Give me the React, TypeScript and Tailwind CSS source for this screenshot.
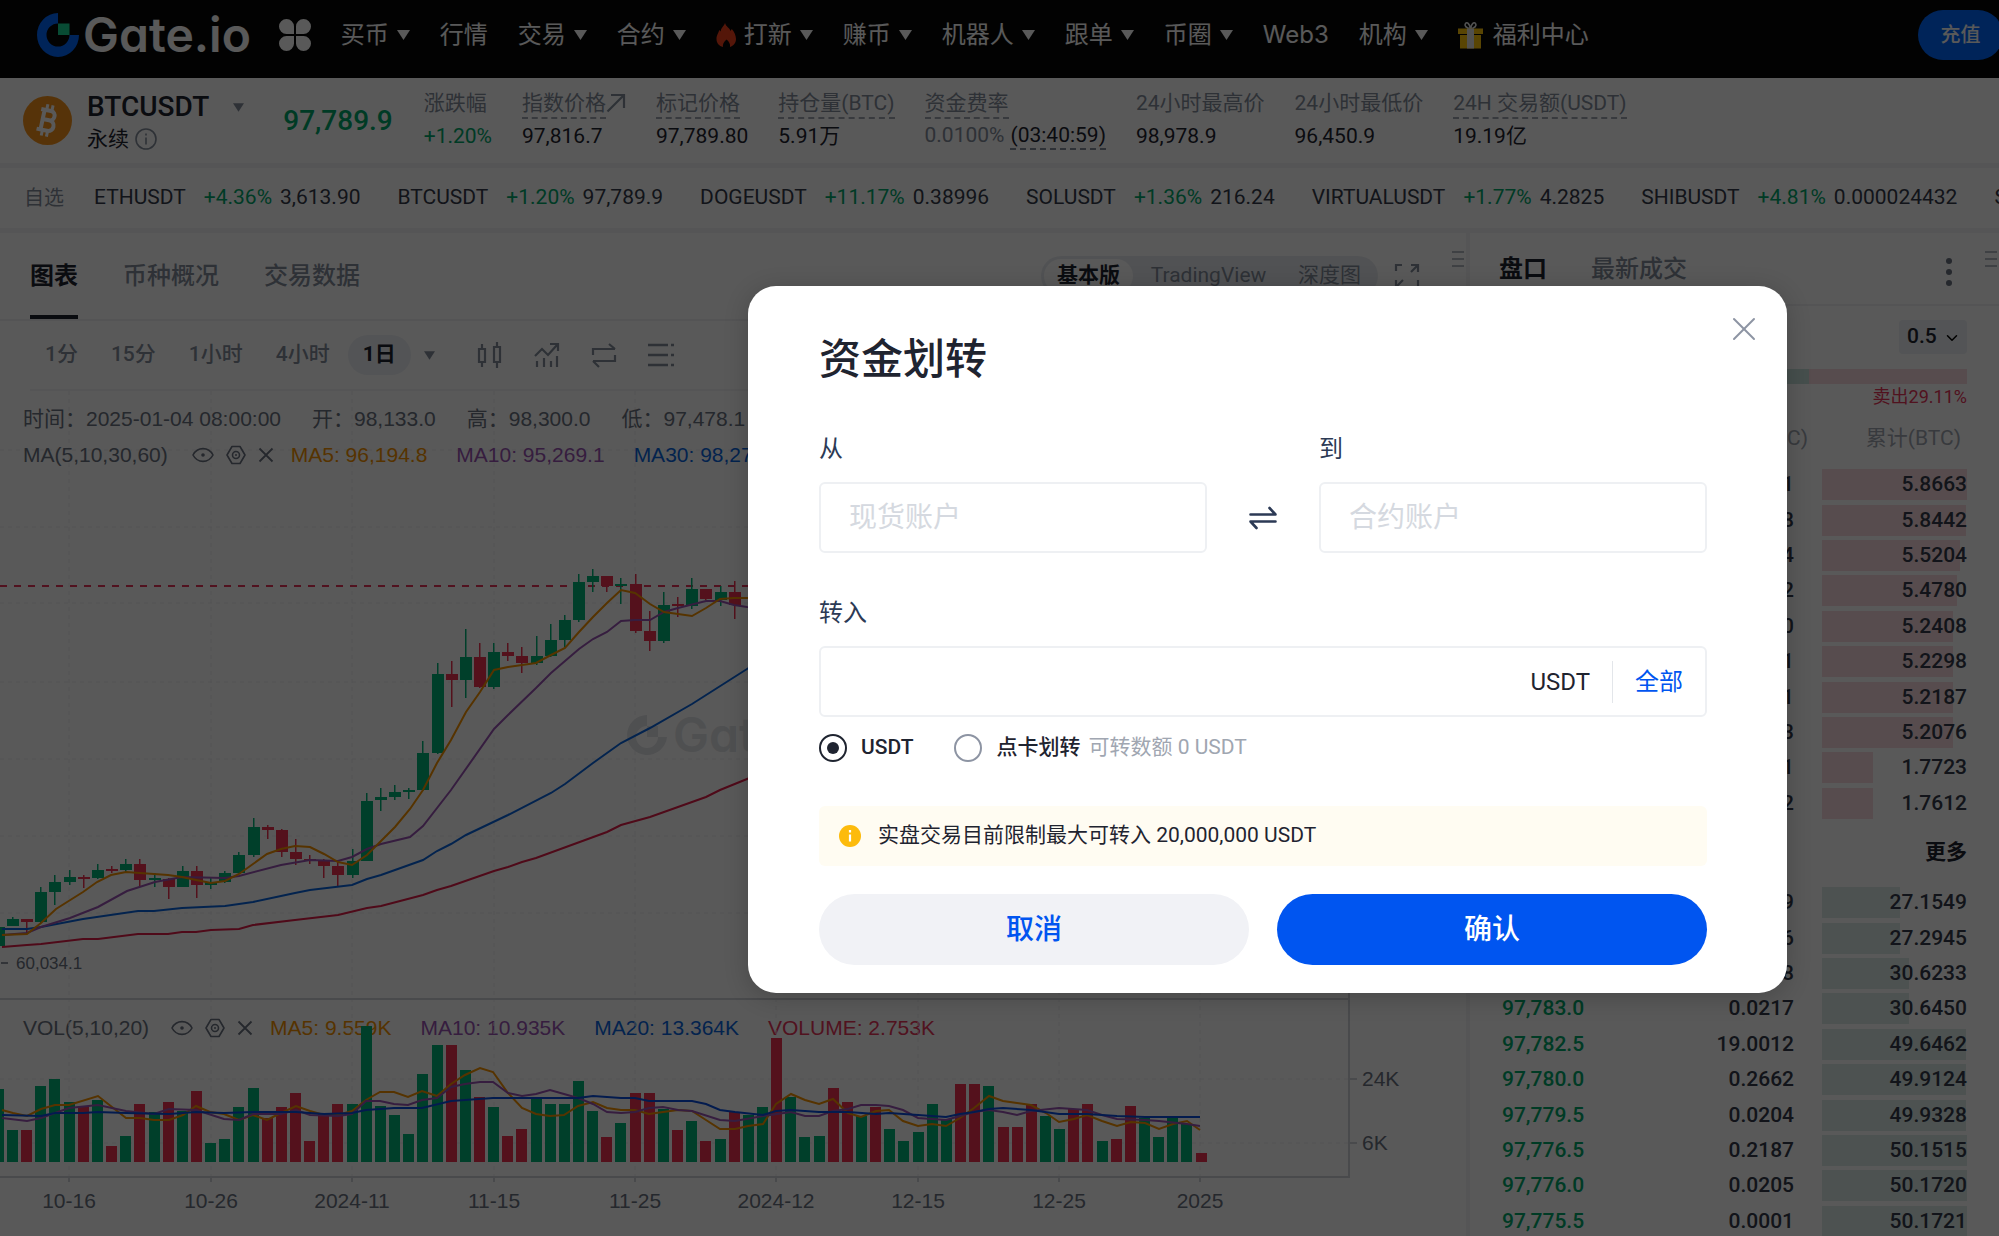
import { ChevronDown, X } from 'lucide-react'
import type { ReactNode } from 'react'

/* ---------- data ---------- */

const NAV: { label: string; caret?: boolean; icon?: 'fire' | 'gift' }[] = [
  { label: '买币', caret: true },
  { label: '行情' },
  { label: '交易', caret: true },
  { label: '合约', caret: true },
  { label: '打新', caret: true, icon: 'fire' },
  { label: '赚币', caret: true },
  { label: '机器人', caret: true },
  { label: '跟单', caret: true },
  { label: '币圈', caret: true },
  { label: 'Web3' },
  { label: '机构', caret: true },
  { label: '福利中心', icon: 'gift' },
]

const TICKERS = [
  ['ETHUSDT', '+4.36%', '3,613.90'],
  ['BTCUSDT', '+1.20%', '97,789.9'],
  ['DOGEUSDT', '+11.17%', '0.38996'],
  ['SOLUSDT', '+1.36%', '216.24'],
  ['VIRTUALUSDT', '+1.77%', '4.2825'],
  ['SHIBUSDT', '+4.81%', '0.000024432'],
  ['SUIUSDT', '+3.02%', '5.2140'],
]

type Row = [price: string, size: string, total: string, depth: number]

const ASKS: Row[] = [
  ['97,794.0', '0.0221', '5.8663', 100],
  ['97,793.5', '0.3238', '5.8442', 99],
  ['97,793.0', '0.0424', '5.5204', 95],
  ['97,792.5', '0.2372', '5.4780', 93],
  ['97,792.0', '0.0110', '5.2408', 90],
  ['97,791.5', '0.0111', '5.2298', 90],
  ['97,791.0', '0.0111', '5.2187', 90],
  ['97,790.5', '3.4353', '5.2076', 90],
  ['97,790.0', '0.0111', '1.7723', 35],
  ['97,789.9', '1.7612', '1.7612', 35],
]

const BIDS: Row[] = [
  ['97,789.8', '27.1549', '27.1549', 54],
  ['97,785.0', '0.1396', '27.2945', 54],
  ['97,784.5', '3.3288', '30.6233', 60],
  ['97,783.0', '0.0217', '30.6450', 60],
  ['97,782.5', '19.0012', '49.6462', 99],
  ['97,780.0', '0.2662', '49.9124', 99],
  ['97,779.5', '0.0204', '49.9328', 99],
  ['97,776.5', '0.2187', '50.1515', 100],
  ['97,776.0', '0.0205', '50.1720', 100],
  ['97,775.5', '0.0001', '50.1721', 100],
]

// [up, body top, body bottom, high, low]
const CANDLES: [number, number, number, number, number][] = [
  [1, 536, 555, 536, 556], [1, 528, 535, 526, 535], [0, 528, 531, 528, 542], [1, 501, 531, 496, 532],
  [1, 491, 501, 484, 514], [1, 486, 491, 479, 494], [0, 486, 487, 484, 497], [1, 479, 487, 473, 488],
  [0, 478, 480, 475, 482], [1, 473, 479, 468, 481], [0, 473, 489, 468, 495], [1, 487, 489, 482, 496],
  [0, 488, 496, 487, 508], [1, 480, 496, 475, 496], [0, 480, 494, 475, 507], [1, 491, 494, 487, 498],
  [1, 482, 491, 480, 492], [1, 464, 482, 461, 482], [1, 436, 464, 427, 466], [0, 436, 439, 434, 448],
  [0, 439, 461, 438, 466], [0, 461, 468, 448, 474], [0, 468, 469, 464, 473], [0, 469, 475, 468, 487],
  [0, 475, 484, 469, 495], [1, 470, 484, 458, 487], [1, 410, 470, 402, 470], [1, 406, 409, 397, 420],
  [1, 401, 406, 394, 409], [1, 399, 400, 397, 408], [1, 362, 399, 350, 400], [1, 283, 362, 272, 363],
  [0, 283, 289, 270, 316], [1, 266, 289, 238, 307], [0, 266, 296, 252, 297], [1, 261, 296, 252, 298],
  [0, 261, 265, 252, 270], [0, 265, 272, 256, 282], [1, 265, 272, 245, 274], [1, 249, 265, 233, 266],
  [1, 229, 249, 224, 256], [1, 191, 229, 183, 231], [1, 185, 191, 178, 201], [0, 185, 195, 185, 201],
  [1, 193, 195, 187, 213], [0, 193, 240, 183, 242], [0, 240, 250, 220, 260], [1, 214, 250, 201, 252],
  [0, 213, 215, 206, 226], [1, 198, 215, 187, 218], [0, 198, 208, 198, 209], [1, 201, 209, 195, 215],
  [0, 201, 214, 190, 228],
]

// [up, bar height]
const VOLUMES: [number, number][] = [
  [1, 73], [1, 32], [0, 32], [1, 76], [1, 83], [1, 60], [0, 56], [1, 62], [0, 16], [1, 26], [0, 58],
  [1, 50], [0, 60], [1, 51], [0, 71], [1, 19], [1, 23], [1, 55], [1, 74], [0, 44], [0, 55], [0, 69],
  [0, 21], [0, 48], [0, 58], [1, 58], [1, 136], [1, 56], [1, 47], [1, 28], [1, 88], [1, 117], [0, 117],
  [1, 92], [0, 65], [1, 55], [0, 26], [0, 33], [1, 63], [1, 58], [1, 58], [1, 81], [1, 51], [0, 25],
  [1, 39], [0, 69], [0, 69], [1, 53], [0, 32], [1, 41], [0, 21], [1, 23], [0, 50], [1, 47], [1, 55],
  [0, 124], [1, 65], [1, 25], [1, 26], [0, 74], [0, 60], [1, 46], [0, 55], [1, 33], [1, 21], [1, 30],
  [1, 58], [1, 43], [0, 78], [0, 78], [1, 76], [0, 35], [0, 35], [0, 58], [1, 46], [1, 33], [0, 53],
  [0, 58], [1, 21], [0, 23], [0, 56], [1, 44], [1, 25], [1, 46], [1, 38], [0, 9],
]

const PRICE_LINES = [
  {
    color: '#e11d48',
    points:
      '2,556 27,554 41,553 83,548 98,548 138,543 168,543 182,541 196,541 211,539 239,538 253,534 295,529 338,524 367,517 381,515 423,504 437,499 451,495 494,480 508,476 522,471 536,467 607,441 621,434 650,426 678,416 706,406 720,399 747,388 790,372',
  },
  {
    color: '#0a66e0',
    points:
      '2,538 27,538 41,536 83,528 138,520 154,520 182,517 225,515 253,511 281,505 295,502 310,499 352,494 367,488 381,484 423,469 437,460 451,453 466,444 508,424 551,402 565,393 593,372 607,362 621,352 650,337 692,313 747,278 790,250',
  },
  {
    color: '#9a55b4',
    points:
      '2,544 27,542 41,536 70,527 98,516 127,500 155,491 182,486 225,487 239,485 281,474 310,469 338,470 352,466 367,458 381,453 410,446 423,435 451,399 494,338 508,324 536,297 551,282 579,258 593,248 607,241 621,230 635,229 650,229 664,221 678,217 706,210 720,210 734,214 747,216 790,218',
  },
  {
    color: '#f59300',
    points:
      '2,544 27,543 41,532 56,518 83,501 97,491 111,484 126,481 154,483 168,484 182,486 196,489 211,492 225,490 239,483 253,473 267,463 281,458 295,455 310,456 324,463 338,471 352,474 367,464 381,450 395,436 410,418 423,399 437,372 451,349 466,321 480,301 494,279 508,276 522,274 536,272 551,264 565,257 579,241 593,226 607,212 621,199 635,202 650,213 664,221 678,223 692,225 706,217 720,208 734,207 790,207',
  },
]

const VOLUME_LINES = [
  {
    color: '#f59300',
    points:
      '2,112 13,115 27,118 41,111 55,107 69,107 98,98 112,109 126,120 140,120 154,122 169,122 183,117 196,108 210,114 224,116 239,122 253,117 267,122 281,115 296,108 310,113 324,117 338,117 352,113 366,102 380,94 394,94 408,99 422,93 437,98 451,86 465,77 480,70 493,74 508,95 522,110 536,116 550,118 564,117 578,108 593,104 607,110 621,112 635,112 649,116 663,114 678,112 692,113 706,122 720,131 735,131 748,128 763,126 776,106 791,96 805,102 819,106 833,101 848,115 861,119 876,113 889,112 903,123 918,128 932,126 946,128 960,120 974,110 989,98 1003,103 1017,105 1031,107 1046,115 1059,124 1074,121 1087,117 1102,123 1117,128 1131,124 1145,125 1159,131 1173,126 1187,123 1200,132',
  },
  {
    color: '#9a55b4',
    points:
      '2,120 27,123 41,120 69,110 98,107 126,113 154,116 169,111 196,112 224,121 239,122 253,116 281,116 296,112 310,117 338,118 352,116 366,103 380,103 394,106 408,107 422,102 437,100 451,89 465,86 480,84 493,84 508,95 522,98 536,96 550,92 564,96 578,100 593,106 607,114 621,115 635,114 649,110 663,109 678,112 692,113 720,122 735,123 763,118 791,114 805,118 819,118 833,113 848,111 861,107 876,107 889,108 903,112 918,120 946,122 974,114 989,112 1003,114 1017,117 1031,113 1059,110 1087,112 1102,117 1117,121 1145,122 1159,123 1187,126 1200,128',
  },
  {
    color: '#0a4fe0',
    points:
      '2,117 41,118 55,115 83,115 98,114 126,115 169,116 196,114 224,115 253,114 296,114 324,116 352,115 366,112 394,110 422,110 451,103 493,100 578,100 593,98 621,100 635,100 649,103 692,103 706,106 720,112 735,114 763,117 776,113 791,112 819,114 848,114 876,116 889,115 918,117 932,118 946,119 960,116 974,114 989,111 1003,110 1031,112 1059,116 1087,116 1117,118 1145,119 1200,119',
  },
]

const DATES = ['10-16', '10-26', '2024-11', '11-15', '11-25', '2024-12', '12-15', '12-25', '2025']
const GRID_X = [69, 211, 352, 494, 635, 776, 918, 1059, 1200]
const AXIS_X = 1349

// x of the i-th bar; the first one is cut by the left edge
const barX = (i: number) => Math.round(13 + 14.15 * (i - 1))
const fill = (up: number) => (up ? '#00b578' : '#f03250')

/* ---------- icons ---------- */

function Caret({ className = '' }: { className?: string }) {
  return (
    <svg viewBox="0 0 13 10" className={className} fill="currentColor">
      <path d="M0 0h13L6.5 10z" />
    </svg>
  )
}

function GateMark({ className = '' }: { className?: string }) {
  return (
    <svg viewBox="0 0 42 44" className={className}>
      <path d="M21 0v10.5A11.5 11.5 0 1 0 32.500 22H42A21 22 0 1 1 21 0z" fill="#0068ff" />
      <path d="M21 10.500h11.500V22H21z" fill="#17d696" />
    </svg>
  )
}

function BtcIcon() {
  return (
    <svg viewBox="0 0 49 49" className="size-[49px] shrink-0">
      <circle cx="24.500" cy="24.500" r="24.500" fill="#f7931a" />
      <g transform="rotate(12 24.500 24.500)" fill="none" stroke="#fff" strokeWidth="4">
        <path d="M19.500 14v21M16 14.500h10c6 0 6 9.500 0 9.500h-6.500M26 24c7.500 0 7.500 10.700 0 10.700H15.500" />
        <path d="M21.500 8.500V14M26.800 8.500V14M21.500 35v5.500M26.800 35v5.500" strokeWidth="3" />
      </g>
    </svg>
  )
}

function FireIcon() {
  return (
    <svg viewBox="0 0 20 24" className="h-6 w-5" fill="#f0401c">
      <path d="M9 0c1 4 4.500 4.500 5.500 8l1.300-2c2.500 3 4.200 6.500 4.200 10 0 4-2.500 6.800-6 8 .5-3-1-5.500-3.500-7.500-2 2-4 4-3.500 7.500-4-1-6.500-4-6.500-8 0-4 2-5.500 2.700-9l1.600 1.500C4.500 5 8 3.500 9 0z" />
    </svg>
  )
}

function GiftIcon() {
  return (
    <svg viewBox="0 0 25 28" className="mr-[2px] h-7 w-[25px]">
      <path d="M12.500 8C8 7 6 4.500 7.500 2.500S12 3 12.500 8zm0 0c4.500-1 6.500-3.500 5-5.500S13 3 12.500 8z" fill="none" stroke="#e8e8e8" strokeWidth="1.600" />
      <path d="M0 7.500h25v5.500H0zM2 14h21v13.500H2z" fill="#ffc60a" />
      <path d="M9 7.500h7v20H9z" fill="#e8e8e8" />
    </svg>
  )
}

function EyeIcon() {
  return (
    <svg viewBox="0 0 22 20" className="h-5 w-[22px]" fill="none" stroke="currentColor" strokeWidth="1.600">
      <path d="M1 10c4.500-8.500 15.500-8.500 20 0-4.500 8.500-15.500 8.500-20 0z" />
      <circle cx="11" cy="10" r="1.800" fill="currentColor" stroke="none" />
    </svg>
  )
}

function HexIcon() {
  return (
    <svg viewBox="0 0 20 20" className="size-5" fill="none" stroke="currentColor" strokeWidth="1.600">
      <path d="M6 1.500h8L19 10l-5 8.500H6L1 10z" strokeLinejoin="round" />
      <circle cx="10" cy="10" r="3.500" />
      <circle cx="10" cy="10" r="1" fill="currentColor" stroke="none" />
    </svg>
  )
}

function CrossIcon() {
  return (
    <svg viewBox="0 0 16 16" className="size-4" fill="none" stroke="currentColor" strokeWidth="1.800">
      <path d="M1.500 1.500l13 13M14.500 1.500l-13 13" />
    </svg>
  )
}

function ToolIcon({ children }: { children: ReactNode }) {
  return (
    <svg viewBox="0 0 26 26" className="size-[26px]" fill="none" stroke="currentColor" strokeWidth="2.200">
      {children}
    </svg>
  )
}

function DragHandle() {
  return (
    <svg viewBox="0 0 12 16" className="absolute top-[18px] right-[2px] h-4 w-3 text-[#b5bac4]" stroke="currentColor" strokeWidth="2">
      <path d="M0 1h12M0 8h12M0 15h12" />
    </svg>
  )
}

/* ---------- header ---------- */

function Header() {
  return (
    <header className="flex h-[78px] shrink-0 items-start bg-[#080808] pl-[37px] text-[24px] text-white">
      <a href="#" className="flex h-[70px] items-center gap-1">
        <GateMark className="h-11 w-[42px]" />
        <span className="font-[Inter] text-[48px] leading-none font-semibold [font-feature-settings:'cv11']">Gate.io</span>
      </a>
      <button className="ml-7 flex h-[70px] items-center" aria-label="全部产品">
        <svg viewBox="0 0 32 32" className="size-8" fill="#fff">
          <path d="M15 15H7.500A7.500 7.500 0 1 1 15 7.500zM17 15V7.500A7.500 7.500 0 1 1 24.500 15zM15 17v7.500A7.500 7.500 0 1 1 7.500 17zM17 17h7.500a7.500 7.500 0 1 1-7.500 7.500z" />
        </svg>
      </button>
      <nav className="ml-[30px] flex h-[70px] flex-1 items-center gap-[30px]">
        {NAV.map((item) => (
          <a
            key={item.label}
            href="#"
            className={`flex shrink-0 items-center gap-2 leading-8 whitespace-nowrap ${item.label === 'Web3' ? 'font-[Inter]' : ''}`}
          >
            {item.icon === 'fire' && <FireIcon />}
            {item.icon === 'gift' && <GiftIcon />}
            {item.label}
            {item.caret && <Caret className="h-[10px] w-[13px]" />}
          </a>
        ))}
      </nav>
      <button className="mt-[10px] -mr-1 h-[50px] w-[85px] shrink-0 rounded-full bg-[#0068ff] text-[20px] font-medium">充值</button>
    </header>
  )
}

function Stat({ label, value, dashed = false, arrow = false }: { label: string; value: ReactNode; dashed?: boolean; arrow?: boolean }) {
  return (
    <div className="shrink-0 whitespace-nowrap">
      <dt className="flex h-[30px] text-[#848e9c]">
        <span className={`border-b-2 leading-[28px] ${dashed ? 'border-dashed border-[#a0a6b1]' : 'border-transparent'}`}>{label}</span>
        {arrow && (
          <svg viewBox="0 0 20 20" className="mt-1 size-5" fill="none" stroke="currentColor" strokeWidth="2.200">
            <path d="M1.500 18.500l16-16M5 2h13v13" />
          </svg>
        )}
      </dt>
      <dd className="leading-[34px] text-[#1f2430]">{value}</dd>
    </div>
  )
}

function MarketInfo() {
  return (
    <section className="flex h-[85px] shrink-0 items-start bg-white pl-[23px] text-[21px]">
      <div className="flex h-[85px] items-center">
        <BtcIcon />
      </div>
      <div className="ml-[15px] pt-[13px]">
        <h1 className="flex items-center gap-6 text-[28px] leading-[32px] font-medium text-[#1f2430]">
          BTCUSDT
          <Caret className="h-[9px] w-[11px] text-[#848e9c]" />
        </h1>
        <p className="flex items-center gap-[6px] leading-[32px] text-[#1f2430]">
          永续
          <svg viewBox="0 0 22 22" className="size-[22px] text-[#848e9c]" fill="none" stroke="currentColor" strokeWidth="1.600">
            <circle cx="11" cy="11" r="10" />
            <path d="M11 9.500v7M11 5.500v2" />
          </svg>
        </p>
      </div>
      <strong className="ml-[39px] text-[28px] leading-[85px] font-medium text-[#00a86b]">97,789.9</strong>
      <dl className="ml-[31px] flex gap-[30px] pt-[11px]">
        <Stat label="涨跌幅" value={<span className="text-[#00a86b]">+1.20%</span>} />
        <Stat label="指数价格" value="97,816.7" dashed arrow />
        <Stat label="标记价格" value="97,789.80" dashed />
        <Stat label="持仓量(BTC)" value="5.91万" dashed />
        <Stat
          label="资金费率"
          dashed
          value={
            <span className="flex gap-[6px] leading-[32px]">
              <span className="text-[#848e9c]">0.0100%</span>
              <span className="h-[31px] border-b-2 border-dashed border-[#848e9c]">(03:40:59)</span>
            </span>
          }
        />
        <Stat label="24小时最高价" value="98,978.9" />
        <Stat label="24小时最低价" value="96,450.9" />
        <Stat label="24H 交易额(USDT)" value="19.19亿" dashed />
      </dl>
    </section>
  )
}

function TickerBar() {
  return (
    <section className="mt-[5px] flex h-[60px] shrink-0 items-center overflow-hidden bg-white pl-6 text-[21px] whitespace-nowrap">
      <span className="mr-[30px] text-[20px] text-[#848e9c]">自选</span>
      <ul className="flex gap-[37px]">
        {TICKERS.map(([name, change, price]) => (
          <li key={name} className="text-[#343b4a]">
            <a href="#" className="flex gap-2">
              <span className="mr-[10px]">{name}</span>
              <span className="text-[#00a86b]">{change}</span>
              {price}
            </a>
          </li>
        ))}
      </ul>
    </section>
  )
}

/* ---------- chart ---------- */

function LegendTools() {
  return (
    <span className="flex items-center gap-3">
      <EyeIcon />
      <HexIcon />
      <CrossIcon />
    </span>
  )
}

function Watermark() {
  return (
    <g fill="#e2e4e8">
      <path d="M647 324v11a11 11 0 1 0 11 11h9a20 20 0 1 1-20-22z" />
      <path d="M647 335h11v11h-11z" />
      <text x="673" y="361" fontSize="48" fontWeight="600" fontFamily="Inter" className="[font-feature-settings:'cv11']">Gate.io</text>
    </g>
  )
}

function PricePane() {
  return (
    <div className="grid h-[607px] [grid-template-columns:minmax(0,1fr)]">
      <svg className="h-full w-full overflow-hidden [grid-area:1/1]">
        <g stroke="#ececf0" strokeDasharray="4 4">
          {GRID_X.map((x) => (
            <line key={x} x1={x} x2={x} y1="0" y2="607" />
          ))}
          {[59, 136, 212, 291, 368, 445, 522].map((y) => (
            <line key={y} x1="0" x2={AXIS_X} y1={y} y2={y} />
          ))}
        </g>
        <Watermark />
        <line x1="0" x2={AXIS_X} y1="195" y2="195" stroke="#e8365a" strokeWidth="2" strokeDasharray="7 7" />
        {CANDLES.map(([up, top, bottom, high, low], i) => (
          <g key={i} fill={fill(up)}>
            <rect x={barX(i) - 1} y={high} width="1.500" height={low - high} />
            <rect x={barX(i) - 6} y={top} width="12" height={Math.max(bottom - top, 2)} />
          </g>
        ))}
        {PRICE_LINES.map((line) => (
          <polyline key={line.color} points={line.points} fill="none" stroke={line.color} strokeWidth="2" />
        ))}
        <path d="M1 572h7" fill="none" stroke="#6b7280" strokeWidth="1.500" />
        <text x="16" y="578" fontSize="17" fill="#6b7280">60,034.1</text>
        <line x1={AXIS_X} x2={AXIS_X} y1="0" y2="607" stroke="#d0d3da" strokeWidth="2" />
      </svg>
      <div className="mt-[10px] ml-[23px] text-[21px] leading-[36px] whitespace-nowrap text-[#6b7280] [grid-area:1/1]">
        <p className="flex gap-[31px]">
          <span>时间：2025-01-04 08:00:00</span>
          <span>开：98,133.0</span>
          <span>高：98,300.0</span>
          <span>低：97,478.1</span>
        </p>
        <p className="flex gap-[29px]">
          <span className="flex items-center gap-6">MA(5,10,30,60) <LegendTools /></span>
          <span className="-ml-3 text-[#f59300]">MA5: 96,194.8</span>
          <span className="text-[#9a55b4]">MA10: 95,269.1</span>
          <span className="text-[#0a66e0]">MA30: 98,271.4</span>
        </p>
      </div>
    </div>
  )
}

function VolumePane() {
  return (
    <div className="grid h-[238px] [grid-template-columns:minmax(0,1fr)]">
      <div className="mt-[12px] ml-[23px] flex h-9 items-center gap-[29px] text-[21px] whitespace-nowrap text-[#6b7280] [grid-area:1/1]">
        <span className="flex items-center gap-[22px]">VOL(5,10,20) <LegendTools /></span>
        <span className="-ml-3 text-[#f59300]">MA5: 9.559K</span>
        <span className="text-[#9a55b4]">MA10: 10.935K</span>
        <span className="text-[#0a66e0]">MA20: 13.364K</span>
        <span className="text-[#e8365a]">VOLUME: 2.753K</span>
      </div>
      <svg className="h-full w-full overflow-hidden [grid-area:1/1]" fontSize="21" fill="#6b7280">
        <g stroke="#ececf0" strokeDasharray="4 4">
          {GRID_X.map((x) => (
            <line key={x} x1={x} x2={x} y1="0" y2="179" />
          ))}
          <line x1="0" x2={AXIS_X} y1="81" y2="81" />
          <line x1="0" x2={AXIS_X} y1="145" y2="145" />
        </g>
        <g stroke="#d0d3da" strokeWidth="2">
          <path d={`M0 1H${AXIS_X}M0 179H${AXIS_X}V0M${AXIS_X} 81h8M${AXIS_X} 145h8`} fill="none" />
          {GRID_X.map((x) => (
            <line key={x} x1={x} x2={x} y1="179" y2="184" />
          ))}
        </g>
        {VOLUMES.map(([up, h], i) => (
          <rect key={i} x={barX(i) - 6} y={164 - h} width="11" height={h} fill={fill(up)} />
        ))}
        {VOLUME_LINES.map((line) => (
          <polyline key={line.color} points={line.points} fill="none" stroke={line.color} strokeWidth="2" />
        ))}
        <text x="1362" y="88">24K</text>
        <text x="1362" y="152">6K</text>
        {DATES.map((date, i) => (
          <text key={date} x={GRID_X[i]} y="210" textAnchor="middle">{date}</text>
        ))}
      </svg>
    </div>
  )
}

function ChartPanel() {
  return (
    <section className="relative flex min-w-0 flex-1 flex-col overflow-hidden bg-white">
      <div className="flex h-[88px] shrink-0 items-stretch border-b-2 border-[#f0f1f4] pr-[46px] pl-[30px] text-[24px] text-[#848e9c]">
        <div className="flex gap-[45px]">
          <button className="border-b-4 border-[#1f2430] pt-1 font-bold text-[#1f2430]">图表</button>
          <button className="border-b-4 border-transparent pt-1 font-medium">币种概况</button>
          <button className="border-b-4 border-transparent pt-1 font-medium">交易数据</button>
        </div>
        <div className="ml-auto flex items-center gap-4 text-[21px]">
          <div className="flex h-10 w-[337px] items-center rounded-full bg-[#e9ecf1] p-[3px]">
            <button className="h-full rounded-full bg-white px-[13px] font-bold text-[#1f2430]">基本版</button>
            <button className="flex-1 text-center">TradingView</button>
            <button className="px-[14px]">深度图</button>
          </div>
          <button aria-label="全屏">
            <ToolIcon>
              <path d="M2 8V2h6M17 2h7v7M24 2l-7 7M2 17v7h7M2 24l7-7M24 17v7h-6" />
            </ToolIcon>
          </button>
        </div>
      </div>
      <DragHandle />
      <div className="mx-[30px] flex h-[70px] shrink-0 items-center border-b-2 border-[#f3f4f6] text-[21px] font-medium text-[#848e9c]">
        <div className="flex items-center gap-[3px]">
          <button className="px-[15px]">1分</button>
          <button className="px-[15px]">15分</button>
          <button className="px-[15px]">1小时</button>
          <button className="px-[15px]">4小时</button>
          <button className="h-10 rounded-full bg-[#edf0f5] px-[15px] font-bold text-[#1f2430]">1日</button>
          <Caret className="mx-[10px] h-[9px] w-[11px]" />
        </div>
        <div className="ml-8 flex gap-[31px]">
          <button aria-label="K线样式">
            <ToolIcon>
              <path d="M2 7h6v13H2zM5 2v5M5 20v5M17 5h6v15h-6zM20 0v5M20 20v6" />
            </ToolIcon>
          </button>
          <button aria-label="指标">
            <ToolIcon>
              <path d="M1 14l7-7 6 6L23 3M16 2h8v7M3 19v6M10 16v9M17 19v6M23 14v11" />
            </ToolIcon>
          </button>
          <button aria-label="对比">
            <ToolIcon>
              <path d="M2 13V7h22M18 2l6 5M24 13v6H2M8 25l-6-6" />
            </ToolIcon>
          </button>
          <button aria-label="设置">
            <ToolIcon>
              <path d="M0 3h20M0 13h20M0 23h20M23 3h3M23 13h3M23 23h3" strokeWidth="2.600" />
            </ToolIcon>
          </button>
        </div>
      </div>
      <div className="font-['Liberation_Sans','Noto_Sans_CJK_SC',sans-serif]">
        <PricePane />
        <VolumePane />
      </div>
    </section>
  )
}

/* ---------- order book ---------- */

function BookRows({ rows, side }: { rows: Row[]; side: 'ask' | 'bid' }) {
  const price = side === 'ask' ? 'text-[#e8365a]' : 'text-[#00a86b]'
  const bar = side === 'ask' ? 'bg-[#f8dbde]' : 'bg-[#dcebe7]'
  return (
    <tbody className="font-medium text-[#343b4a]">
      {rows.map(([p, size, total, depth]) => (
        <tr key={p}>
          <td className={`p-0 ${price}`}>{p}</td>
          <td className="p-0 pr-7 text-right">{size}</td>
          <td className="w-[145px] p-0">
            <div className="grid">
              <span className={`h-[31px] [grid-area:1/1] ${bar}`} style={{ width: `${depth}%` }} />
              <span className="text-right leading-[31px] [grid-area:1/1]">{total}</span>
            </div>
          </td>
        </tr>
      ))}
    </tbody>
  )
}

function OrderBook() {
  return (
    <section className="relative w-[529px] shrink-0 overflow-hidden bg-white">
      <DragHandle />
      <div className="flex h-[73px] items-center gap-11 border-b-2 border-[#f0f1f4] pr-[47px] pl-[29px] text-[24px]">
        <button className="font-bold text-[#1f2430]">盘口</button>
        <button className="font-medium text-[#848e9c]">最新成交</button>
        <button className="ml-auto text-[#6b7280]" aria-label="更多">
          <svg viewBox="0 0 6 30" className="mt-2 h-[30px] w-[6px]" fill="currentColor">
            <circle cx="3" cy="3" r="3" />
            <circle cx="3" cy="14" r="3" />
            <circle cx="3" cy="25" r="3" />
          </svg>
        </button>
      </div>
      <div className="px-8">
        <div className="flex justify-end pt-[14px]">
          <label className="relative">
            <select aria-label="精度" className="h-[34px] w-[68px] appearance-none rounded bg-[#edf0f5] pl-2 text-[21px] font-medium text-[#1f2430]">
              <option>0.5</option>
            </select>
            <ChevronDown className="pointer-events-none absolute top-[9px] right-[6px] size-[18px]" />
          </label>
        </div>
        <div className="mt-[15px] flex h-[15px]">
          <span className="flex-1 bg-[#c9e3dc]" />
          <span className="w-[34%] bg-[#f8dbde]" />
        </div>
        <p className="flex justify-between text-[18px] leading-[26px]">
          <span className="text-[#00a86b]">买入70.89%</span>
          <span className="text-[#e8365a]">卖出29.11%</span>
        </p>
        <table className="h-[411px] w-full border-collapse text-[21px] leading-none">
          <thead>
            <tr className="h-[57px] text-[#a0a6b1]">
              <th className="p-0 text-left font-normal">价格(USDT)</th>
              <th className="p-0 pr-[14px] text-right font-normal">数量(BTC)</th>
              <th className="p-0 pr-[6px] text-right font-normal">累计(BTC)</th>
            </tr>
          </thead>
          <BookRows rows={ASKS} side="ask" />
        </table>
        <div className="flex h-16 items-center justify-between">
          <span className="text-[24px] font-medium text-[#00a86b]">97,789.9</span>
          <button className="text-[21px] font-bold text-[#1f2430]">更多</button>
        </div>
        <table className="h-[354px] w-full border-collapse text-[21px] leading-none">
          <BookRows rows={BIDS} side="bid" />
        </table>
      </div>
    </section>
  )
}

/* ---------- transfer dialog ---------- */

function TransferDialog() {
  const field = 'h-[71px] w-full rounded-md border-2 border-[#eef0f3] bg-white px-7 text-[28px] text-[#1f2430] placeholder:text-[#d5d9e0]'
  const radio =
    "grid size-7 appearance-none place-items-center rounded-full border-2 border-[#8d94a3] checked:border-[#1f2430] checked:before:size-3 checked:before:rounded-full checked:before:bg-[#1f2430] checked:before:content-['']"
  return (
    <div className="absolute inset-0 flex items-start justify-end bg-black/65 pt-[286px] pr-[212px]">
      <form
        role="dialog"
        aria-labelledby="transfer-title"
        className="relative w-[1039px] rounded-[28px] bg-white pt-11 pr-20 pb-7 pl-[71px] text-[#1f2430] shadow-[0_4px_24px_rgba(0,0,0,0.2)]"
      >
        <button type="button" aria-label="关闭" className="absolute top-[23px] right-[23px] text-[#8d94a3]">
          <X className="size-10" strokeWidth={1.2} />
        </button>
        <h2 id="transfer-title" className="text-[42px] leading-[60px] font-medium">资金划转</h2>

        <div className="mt-10 flex items-end">
          <div className="flex-1">
            <label htmlFor="from" className="block h-[52px] text-[24px] leading-[38px] text-[#2c3a55]">从</label>
            <input id="from" placeholder="现货账户" className={field} />
          </div>
          <button type="button" aria-label="互换" className="flex h-[70px] w-28 items-center justify-center text-[#2c3a55]">
            <svg viewBox="0 0 28 24" className="h-6 w-7" fill="none" stroke="currentColor" strokeWidth="2.600" strokeLinecap="round" strokeLinejoin="round">
              <path d="M1.500 8.500h25L20.500 2M26.500 15.500h-25L7.500 22" />
            </svg>
          </button>
          <div className="flex-1">
            <label htmlFor="to" className="block h-[52px] text-[24px] leading-[38px] text-[#2c3a55]">到</label>
            <input id="to" placeholder="合约账户" className={field} />
          </div>
        </div>

        <label htmlFor="amount" className="mt-[41px] block h-[52px] text-[24px] leading-[38px] text-[#2c3a55]">转入</label>
        <div className="flex h-[71px] items-center rounded-md border-2 border-[#eef0f3] pr-[22px] text-[24px]">
          <input id="amount" className="h-full min-w-0 flex-1 px-7 outline-none" />
          <span>USDT</span>
          <span className="mx-[22px] h-[42px] w-px bg-[#e3e6ea]" />
          <button type="button" className="text-[#0055f0]">全部</button>
        </div>

        <div className="mt-[17px] flex h-7 items-center text-[21px]">
          <label className="flex items-center gap-[14px] font-medium">
            <input type="radio" name="coin" defaultChecked className={radio} />
            USDT
          </label>
          <label className="ml-[41px] flex items-center gap-[14px] font-medium">
            <input type="radio" name="coin" className={radio} />
            点卡划转
          </label>
          <span className="ml-2 text-[#a0a6b1]">可转数额 0 USDT</span>
        </div>

        <p className="mt-[44px] flex h-[60px] items-center gap-[17px] rounded-md bg-[#fffcf2] pl-5 text-[21px]">
          <svg viewBox="0 0 22 22" className="size-[22px]">
            <circle cx="11" cy="11" r="11" fill="#fdbb0c" />
            <path d="M11 9.500v7M11 5v2.500" stroke="#fff" strokeWidth="2.200" />
          </svg>
          实盘交易目前限制最大可转入 20,000,000 USDT
        </p>

        <div className="mt-7 grid grid-cols-2 gap-7 text-[28px] font-medium">
          <button type="button" className="h-[71px] rounded-full bg-[#f1f2f6] text-[#0055f0]">取消</button>
          <button type="submit" className="h-[71px] rounded-full bg-[#0055f0] text-white">确认</button>
        </div>
      </form>
    </div>
  )
}

export default function App() {
  return (
    <div className="relative flex h-screen flex-col overflow-hidden bg-[#f2f3f5] font-[Roboto,'Noto_Sans_CJK_SC',sans-serif]">
      <Header />
      <MarketInfo />
      <TickerBar />
      <main className="mt-[5px] flex min-h-0 flex-1 gap-1">
        <ChartPanel />
        <OrderBook />
      </main>
      <TransferDialog />
    </div>
  )
}
